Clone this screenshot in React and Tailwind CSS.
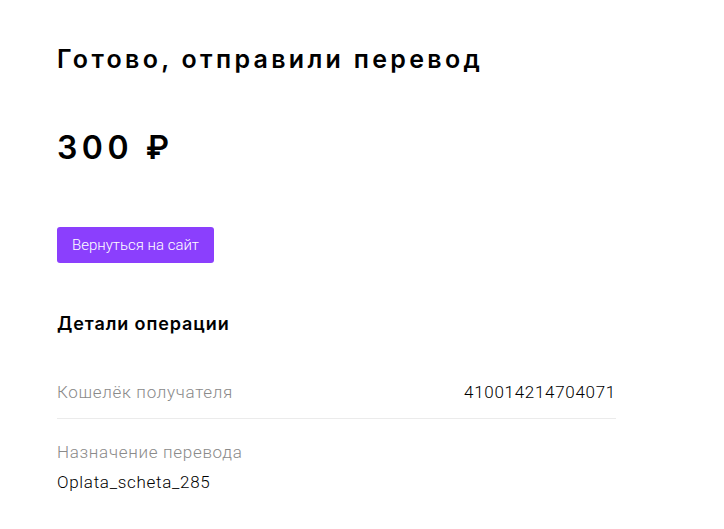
export default function App() {
  return (
    <div className="min-h-screen bg-white pl-[57px] pt-[43px] text-black">
      <div className="w-[559px]">
        <h1 className="font-['Inter',sans-serif] text-[25px] font-semibold leading-[32px] tracking-[3.3px]">Готово, отправили перевод</h1>
        <div className="mt-[53px] font-['Inter',sans-serif] text-[32px] font-semibold leading-[40px] tracking-[4.5px]">300 ₽</div>
        <button className="mt-[59px] block h-[36px] w-[157px] rounded-[3px] bg-[#8b3ffd] font-['Roboto',sans-serif] text-[15px] font-light text-white">Вернуться на сайт</button>
        <div className="mt-[49px] font-['Inter',sans-serif] text-[18px] font-semibold leading-[24px] tracking-[0.9px]">Детали операции</div>
        <div className="mt-[44px] flex items-center justify-between border-b border-[#ebebeb] pb-[14px] font-['Roboto',sans-serif] text-[17px] font-light leading-[24px] tracking-[0.7px]">
          <span className="text-[#8a8a8a]">Кошелёк получателя</span>
          <span className="text-black">410014214704071</span>
        </div>
        <div className="mt-[21px] font-['Roboto',sans-serif] text-[17px] font-light leading-[24px] tracking-[0.7px] text-[#8a8a8a]">Назначение перевода</div>
        <div className="mt-[6px] font-['Roboto',sans-serif] text-[17px] font-light leading-[24px] tracking-[0.7px] text-black">Oplata_scheta_285</div>
      </div>
    </div>
  );
}
